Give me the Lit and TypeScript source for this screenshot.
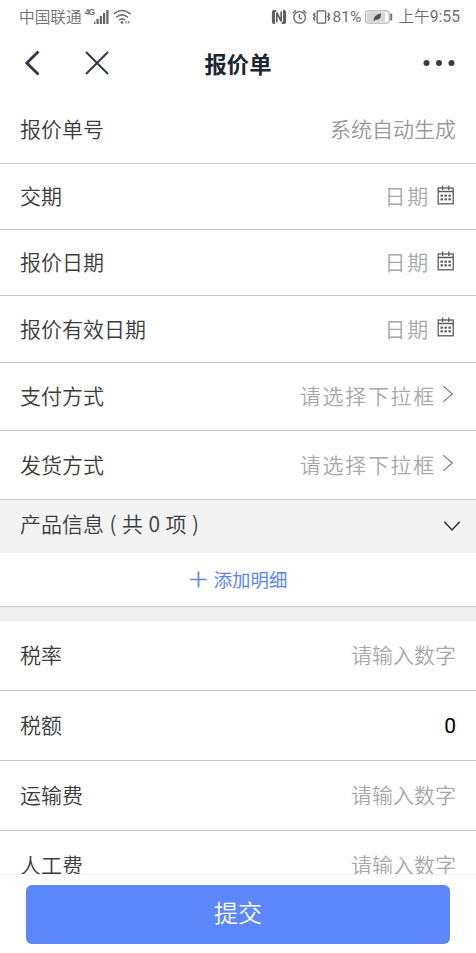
import { LitElement, html, css, svg, nothing } from "lit";
import { customElement, property } from "lit/decorators.js";

type Kind = "text" | "date" | "select" | "number" | "value";

interface Field {
  label: string;
  kind: Kind;
  value: string;
  height: number;
}

const HEAD: Field[] = [
  { label: "报价单号", kind: "text", value: "系统自动生成", height: 68 },
  { label: "交期", kind: "date", value: "日期", height: 66 },
  { label: "报价日期", kind: "date", value: "日期", height: 66 },
  { label: "报价有效日期", kind: "date", value: "日期", height: 67 },
  { label: "支付方式", kind: "select", value: "请选择下拉框", height: 68 },
  { label: "发货方式", kind: "select", value: "请选择下拉框", height: 69 },
];

const COSTS: Field[] = [
  { label: "税率", kind: "number", value: "请输入数字", height: 70 },
  { label: "税额", kind: "value", value: "0", height: 70 },
  { label: "运输费", kind: "number", value: "请输入数字", height: 70 },
  { label: "人工费", kind: "number", value: "请输入数字", height: 70 },
];

const calendarIcon = html`<svg width="18" height="20" viewBox="0 0 18 20">
  <rect x="1.2" y="3" width="15" height="15.8" fill="none" stroke="#5c5c5c" stroke-width="1.3" />
  <path d="M1.2 6.5H16.2M5.6 0.6V5M11.8 0.6V5" fill="none" stroke="#5c5c5c" stroke-width="1.3" />
  ${[3.5, 7.4, 11.4].map((x) =>
    [9.6, 13.3].map((y) => svg`<rect x=${x} y=${y} width="2.5" height="2.1" fill="#5c5c5c" />`)
  )}
</svg>`;

const chevronRight = html`<svg width="12" height="18" viewBox="0 0 12 18">
  <path d="M1.2 1.2L10.3 9L1.2 16.8" fill="none" stroke="#777" stroke-width="1.1" />
</svg>`;

@customElement("form-row")
class FormRow extends LitElement {
  @property({ attribute: false }) field!: Field;

  static styles = css`
    :host {
      display: flex;
      align-items: center;
      justify-content: space-between;
      box-sizing: border-box;
      flex: none;
      padding: 0 20px 3px;
      border-bottom: 1px solid #cbcbcb;
      background: #fff;
    }
    .label {
      color: #3c3c3c;
    }
    .side {
      display: flex;
      align-items: center;
      color: #a9a9a9;
    }
    .text {
      color: #999;
    }
    .value {
      color: #000;
      font: 400 21px/30px Roboto, sans-serif;
      padding-top: 3px;
    }
    .date,
    .select {
      letter-spacing: 1.7px;
    }
    .icon {
      display: flex;
    }
    .date .icon {
      margin: 0 1px 1px 7px;
    }
    .select .icon {
      margin: 0 2px 2px 6px;
    }
  `;

  render() {
    const { label, kind, value } = this.field;
    const icon = kind === "date" ? calendarIcon : kind === "select" ? chevronRight : nothing;
    return html`
      <span class="label">${label}</span>
      <span class="side ${kind}">
        <span>${value}</span>
        ${icon === nothing ? nothing : html`<span class="icon">${icon}</span>`}
      </span>
    `;
  }
}

@customElement("status-bar")
class StatusBar extends LitElement {
  static styles = css`
    :host {
      display: flex;
      align-items: center;
      justify-content: space-between;
      box-sizing: border-box;
      height: 33px;
      flex: none;
      padding: 0 16px 0 19px;
      color: #707070;
      font: 350 15.7px/24px Roboto, "Noto Sans CJK SC", sans-serif;
    }
    .group {
      display: flex;
      align-items: center;
    }
    .carrier {
      font-family: "Noto Sans CJK SC", sans-serif;
    }
    .net {
      align-self: flex-start;
      margin: 2px 0 0 3px;
      font: 700 8.5px/11px "Liberation Sans", sans-serif;
      width: 9px;
      letter-spacing: -1px;
    }
    .meridiem {
      font-family: "Noto Sans CJK SC", sans-serif;
    }
    .num {
      font-weight: 400;
      font-family: Roboto, sans-serif;
    }
    svg {
      display: block;
      flex: none;
    }
    .wifi { margin-left: 4px; }
    .alarm { margin-left: 5px; }
    .vibrate { margin-left: 4px; }
    .percent { margin-left: 2px; font-weight: 400; font-size: 15.5px; }
    .battery { margin: 0 5px 0 4px; }
  `;

  render() {
    return html`
      <div class="group">
        <span class="carrier">中国联通</span>
        <span class="net">4G</span>
        <svg width="16" height="16" viewBox="0 0 16 16" fill="#666">
          <rect x="-1" y="12.5" width="2.4" height="2.5" />
          <rect x="2.5" y="10" width="2.2" height="5" />
          <rect x="5.8" y="7" width="2.2" height="8" />
          <rect x="9" y="4" width="2.2" height="11" />
          <rect x="12.3" y="1" width="2.2" height="14" />
        </svg>
        <svg class="wifi" width="19" height="16" viewBox="0 0 19 16" fill="none" stroke="#707070" stroke-width="1.6">
          <path d="M-0.4 5.2Q8 -2.2 16.6 5.2M2.3 8.3Q8 3.3 14 8.3M5 11.2Q8 8.6 11.2 11.2" />
          <circle cx="8" cy="13.4" r="1.4" fill="#707070" stroke="none" />
          <path d="M12.6 11.5L10.8 13.2L12.6 15ZM13.8 11.5L16 13.2L13.8 15Z" fill="#888" stroke="none" />
        </svg>
      </div>
      <div class="group">
        <svg width="16" height="16" viewBox="0 0 16 16" fill="none" stroke="#606060">
          <path d="M5.2 1.9H3Q1.9 1.9 1.9 3V13Q1.9 14 3 14V3" stroke-width="2" />
          <path d="M10.8 14H13Q14.1 14 14.1 13V3Q14.1 1.9 13 1.9V13" stroke-width="2" />
          <path d="M5.8 13.6V3.6L10.2 12.4V2.4" stroke-width="1.7" />
        </svg>
        <svg class="alarm" width="16" height="16" viewBox="0 0 16 16" fill="none" stroke="#666" stroke-width="1.3">
          <circle cx="7.6" cy="8.4" r="5.8" />
          <path d="M7.4 5V8.8L9.8 10.4M0.8 4.2L4 1.3M11.2 1.3L14.4 4.2" />
        </svg>
        <svg class="vibrate" width="19" height="16" viewBox="0 0 19 16" fill="none" stroke="#666" stroke-width="1.3">
          <rect x="5.2" y="1.8" width="8.4" height="12.4" rx="1" />
          <path d="M3 4L1.6 5.8L3 7.6L1.6 9.4L3 11.6M16 4L17.4 5.8L16 7.6L17.4 9.4L16 11.6" stroke-width="1.6" />
        </svg>
        <span class="percent">81%</span>
        <svg class="battery" width="28" height="14" viewBox="0 0 28 14">
          <rect x="0.6" y="0.9" width="23.6" height="12.2" rx="2.2" fill="#fff" stroke="#a0a0a0" />
          <rect x="2" y="2.3" width="18" height="9.4" rx="1" fill="#d4d4d4" />
          <path d="M8.6 10.6Q8 5.4 16 3.2Q16.4 10.3 10.6 9.6L9.6 11Z" fill="#505050" />
          <rect x="25.3" y="3.6" width="1.9" height="7" rx="0.7" fill="#707070" />
        </svg>
        <span class="meridiem">上午<span class="num">9:55</span></span>
      </div>
    `;
  }
}

@customElement("app-root")
class AppRoot extends LitElement {
  static styles = css`
    :host {
      display: flex;
      flex-direction: column;
      height: 953px;
      overflow: hidden;
      background: #fff;
      color: #3c3c3c;
      font: 350 21px/30px "Noto Sans CJK SC", sans-serif;
    }
    svg {
      display: block;
      flex: none;
    }
    .nav {
      display: grid;
      grid-template-columns: 1fr auto 1fr;
      align-items: center;
      flex: none;
      height: 63px;
      padding: 0 20px 3px;
      box-sizing: border-box;
    }
    .left {
      display: flex;
      align-items: center;
      gap: 44px;
      padding-left: 4px;
    }
    .title {
      font-size: 22.3px;
      font-weight: 700;
      color: #1d2733;
      margin-bottom: 1px;
    }
    .more {
      justify-self: end;
    }
    .body {
      flex: 1;
      min-height: 0;
      overflow: hidden;
      display: flex;
      flex-direction: column;
    }
    .section {
      display: flex;
      align-items: center;
      justify-content: space-between;
      flex: none;
      box-sizing: border-box;
      height: 53px;
      padding: 0 15px 8px 20px;
      background: #f3f3f3;
    }
    .section svg {
      margin-top: 6px;
    }
    .count {
      word-spacing: 0.8px;
    }
    .add {
      display: flex;
      align-items: center;
      justify-content: center;
      gap: 7px;
      flex: none;
      box-sizing: border-box;
      height: 54px;
      padding: 0 0 1px 1px;
      border-bottom: 1px solid #cbcbcb;
      color: #5b83f7;
      font-size: 18.4px;
      font-weight: 400;
    }
    .gap {
      flex: none;
      height: 14px;
      background: #efefef;
    }
    .footer {
      flex: none;
      box-sizing: border-box;
      height: 79px;
      border-top: 1px solid #f2f2f2;
      padding: 10px 26px 0;
      background: #fff;
    }
    .submit {
      display: flex;
      align-items: center;
      justify-content: center;
      box-sizing: border-box;
      height: 59px;
      width: 100%;
      border: 0;
      border-radius: 6px;
      background: #5c87fb;
      color: #fff;
      font: 350 24px/34px "Noto Sans CJK SC", sans-serif;
      padding: 0 0 5px;
    }
  `;

  private row(field: Field) {
    return html`<form-row style="height:${field.height}px" .field=${field}></form-row>`;
  }

  render() {
    return html`
      <status-bar></status-bar>
      <div class="nav">
        <div class="left">
          <svg width="17" height="26" viewBox="0 0 17 26">
            <path d="M14.5 1.5L2.8 13L14.5 24.5" fill="none" stroke="#2c394a" stroke-width="2.8" />
          </svg>
          <svg width="24" height="24" viewBox="0 0 24 24">
            <path d="M1 1L23 23M23 1L1 23" fill="none" stroke="#2c394a" stroke-width="2" />
          </svg>
        </div>
        <div class="title">报价单</div>
        <svg class="more" width="34" height="8" viewBox="0 0 34 8" fill="#333e4b">
          <circle cx="4.5" cy="4" r="3" />
          <circle cx="17" cy="4" r="3" />
          <circle cx="29.5" cy="4" r="3" />
        </svg>
      </div>
      <div class="body">
        ${HEAD.map((f) => this.row(f))}
        <div class="section">
          <span class="count">产品信息 ( 共 0 项 )</span>
          <svg width="18" height="12" viewBox="0 0 18 12">
            <path d="M1.3 1.8L9 10L16.7 1.8" fill="none" stroke="#333" stroke-width="1.5" />
          </svg>
        </div>
        <div class="add">
          <svg width="17" height="17" viewBox="0 0 17 17">
            <path d="M8.5 0.5V16.5M0.5 8.5H16.5" stroke="#5b83f7" stroke-width="1.7" />
          </svg>
          <span>添加明细</span>
        </div>
        <div class="gap"></div>
        ${COSTS.map((f) => this.row(f))}
      </div>
      <div class="footer"><button class="submit">提交</button></div>
    `;
  }
}
